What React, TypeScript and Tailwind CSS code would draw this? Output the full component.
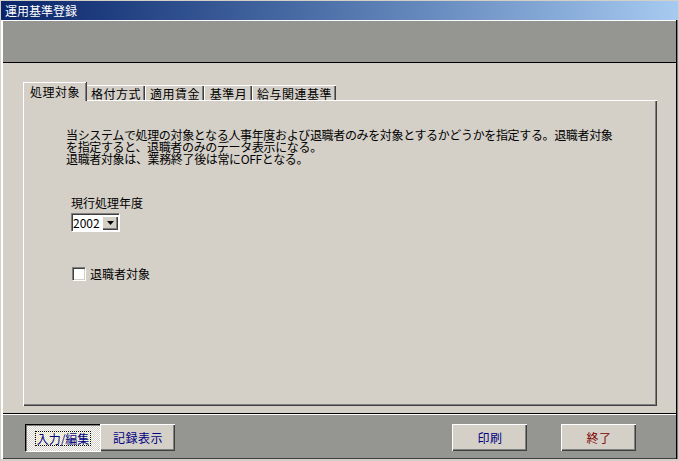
import type { ReactNode } from "react";

const font = { fontFamily: '"Noto Sans CJK JP", "Noto Sans", sans-serif' };

type Tab = { label: string; width: string; active?: boolean };

const tabs: Tab[] = [
  { label: "処理対象", width: "w-[63px]", active: true },
  { label: "格付方式", width: "w-[59px]" },
  { label: "適用賃金", width: "w-[59px]" },
  { label: "基準月", width: "w-[48px]" },
  { label: "給与関連基準", width: "w-[84px]" },
];

function TabHead({ tab }: { tab: Tab }) {
  if (tab.active) {
    return (
      <div
        className={`${tab.width} relative z-10 -mb-[1px] flex h-[19px] items-start justify-center border-l border-t border-white bg-[#d4d0c8] pt-[2px] shadow-[1px_0_0_#404040,inset_-1px_0_0_#808080]`}
      >
        <span className="text-[12px] leading-[14px] tracking-[0.5px]">{tab.label}</span>
      </div>
    );
  }
  return (
    <div
      className={`${tab.width} flex h-[15px] items-start justify-center border-l border-t border-white bg-[#d4d0c8] pt-[1px] shadow-[inset_-1px_0_0_#404040,inset_-2px_0_0_#808080]`}
    >
      <span className="text-[12px] leading-[13px] tracking-[0.5px]">{tab.label}</span>
    </div>
  );
}

function RaisedButton({ children, color }: { children: ReactNode; color: string }) {
  return (
    <button
      className={`flex h-[27px] w-[75px] items-center justify-center border-l border-t border-white bg-[#d4d0c8] text-[12px] ${color} shadow-[inset_-1px_-1px_0_#404040,inset_-2px_-2px_0_#808080]`}
    >
      <span className="tracking-[0.5px]">{children}</span>
    </button>
  );
}

export default function App() {
  return (
    <div
      className="flex h-[461px] w-[679px] flex-col bg-[#d4d0c8] pl-[1px] pr-[1px] pt-[1px] text-black"
      style={font}
    >
      {/* title bar */}
      <div className="flex h-[19px] shrink-0 items-center bg-gradient-to-r from-[#0a246a] to-[#a6caf0] pl-[4px] text-[12px] text-white">
        運用基準登録
      </div>

      <div className="flex min-h-0 flex-1">
        <div className="flex min-w-0 flex-1 flex-col border-l-2 border-white border-r border-r-black">
          <div className="h-[1px] bg-white" />
          <div className="h-[41px] bg-[#959691]" />
          <div className="h-[1px] bg-black" />

          {/* body */}
          <div className="flex flex-1 flex-col pl-[20px] pr-[19px] pt-[19px] pb-[7px]">
            <div className="flex items-end pl-0">
              {tabs.map((t) => (
                <TabHead key={t.label} tab={t} />
              ))}
            </div>
            <div className="flex-1 border-l border-t border-white shadow-[inset_-1px_-1px_0_#404040,inset_-2px_-2px_0_#808080] pl-[42px] pt-[28px]">
              <div className="text-[12px] leading-[12px] tracking-[-0.35px]">
                <div>当システムで処理の対象となる人事年度および退職者のみを対象とするかどうかを指定する。退職者対象</div>
                <div>を指定すると、退職者のみのデータ表示になる。</div>
                <div>退職者対象は、業務終了後は常にOFFとなる。</div>
              </div>

              <div className="ml-[5px] mt-[32px] text-[12px] leading-[12px]">現行処理年度</div>
              <div className="ml-[5px] mt-[4px] flex h-[18px] w-[48px] items-center border-l border-t border-[#808080] bg-white shadow-[inset_1px_1px_0_#404040,1px_1px_0_#ffffff]">
                <span className="pl-[1px] text-[12px] leading-[14px]">2002</span>
                <div className="ml-auto mr-[1px] flex h-[14px] w-[16px] items-center justify-center border-l border-t border-white bg-[#d4d0c8] shadow-[inset_-1px_-1px_0_#404040,inset_-2px_-2px_0_#808080]">
                  <svg width="7" height="4" viewBox="0 0 7 4">
                    <path d="M0 0h7L3.5 4z" fill="#000" />
                  </svg>
                </div>
              </div>

              <div className="ml-[6px] mt-[36px] flex items-center gap-[5px]">
                <div className="h-[13px] w-[13px] border-l border-t border-[#808080] bg-white shadow-[inset_1px_1px_0_#404040,inset_-1px_-1px_0_#d4d0c8,1px_1px_0_#ffffff]" />
                <span className="text-[12px] leading-[13px]">退職者対象</span>
              </div>
            </div>
          </div>

          <div className="h-[1px] bg-black" />
          <div className="h-[1px] bg-white" />

          {/* footer */}
          <div className="flex h-[43px] items-start bg-[#959691] pl-[22px] pt-[9px]">
            <button className="flex h-[27px] w-[75px] items-center justify-center border-l border-t border-black bg-[repeating-conic-gradient(#ffffff_0%_25%,#d4d0c8_0%_50%)] bg-[length:2px_2px] text-[12px] text-[#000080] shadow-[inset_1px_1px_0_#808080,1px_1px_0_#ffffff]">
              <span className="border border-dotted border-black bg-[#fafad2]/40 px-[1px] leading-[13px]">入力/編集</span>
            </button>
            <RaisedButton color="text-[#000080]">記録表示</RaisedButton>
            <div className="ml-[277px]">
              <RaisedButton color="text-[#000080]">印刷</RaisedButton>
            </div>
            <div className="ml-[34px]">
              <RaisedButton color="text-[#800000]">終了</RaisedButton>
            </div>
          </div>
          <div className="h-[1px] bg-[#404040]" />
        </div>
        <div className="w-[1px] bg-[#808080]" />
      </div>
      <div className="h-[2px] shrink-0 bg-[#d4d0c8]" />
    </div>
  );
}
